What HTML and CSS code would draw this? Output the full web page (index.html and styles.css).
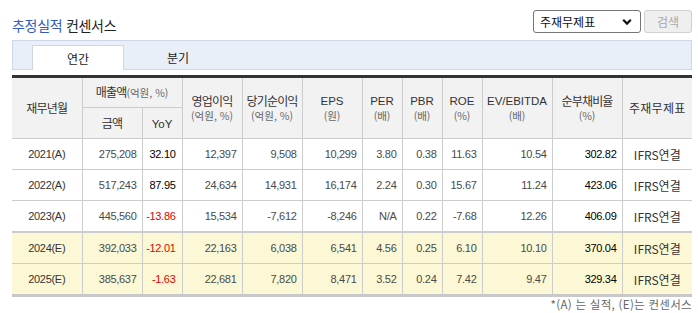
FILE: index.html
```html
<!DOCTYPE html>
<html lang="ko">
<head>
<meta charset="utf-8">
<title>추정실적 컨센서스</title>
<link rel="stylesheet" href="styles.css">
</head>
<body>
<div class="wrap">
  <div class="top">
    <h2 class="title"><span class="blue">추정실적</span> 컨센서스</h2>
    <div class="controls">
      <div class="select"><span>주재무제표</span>
        <svg class="chev" width="10" height="8" viewBox="0 0 10 8"><path d="M1.2 1.8 L5 5.6 L8.8 1.8" fill="none" stroke="#111" stroke-width="2.2"/></svg>
      </div>
      <div class="btn">검색</div>
    </div>
  </div>
  <div class="tabs">
    <div class="tab active">연간</div>
    <div class="tab">분기</div>
  </div>
  <table class="grid">
    <colgroup>
      <col class="w70"><col class="w60"><col class="w40"><col class="w60"><col class="w60"><col class="w60">
      <col class="w40"><col class="w40"><col class="w40"><col class="w70"><col class="w70"><col class="w70">
    </colgroup>
    <thead>
      <tr class="h1">
        <th rowspan="2">재무년월</th>
        <th colspan="2">매출액<span class="unit">(억원, %)</span></th>
        <th rowspan="2">영업이익<br><span class="unit">(억원, %)</span></th>
        <th rowspan="2">당기순이익<br><span class="unit">(억원, %)</span></th>
        <th rowspan="2"><span class="en">EPS</span><br><span class="unit">(원)</span></th>
        <th rowspan="2"><span class="en">PER</span><br><span class="unit">(배)</span></th>
        <th rowspan="2"><span class="en">PBR</span><br><span class="unit">(배)</span></th>
        <th rowspan="2"><span class="en">ROE</span><br><span class="unit">(%)</span></th>
        <th rowspan="2"><span class="en">EV/EBITDA</span><br><span class="unit">(배)</span></th>
        <th rowspan="2">순부채비율<br><span class="unit">(%)</span></th>
        <th rowspan="2" class="wide">주재무제표</th>
      </tr>
      <tr class="h2">
        <th>금액</th>
        <th><span class="en">YoY</span></th>
      </tr>
    </thead>
    <tbody>
      <tr>
        <td class="yr">2021(A)</td><td>275,208</td><td class="em yoy">32.10</td><td>12,397</td><td>9,508</td><td>10,299</td>
        <td>3.80</td><td>0.38</td><td>11.63</td><td>10.54</td><td class="em">302.82</td><td class="ko">IFRS연결</td>
      </tr>
      <tr>
        <td class="yr">2022(A)</td><td>517,243</td><td class="em yoy">87.95</td><td>24,634</td><td>14,931</td><td>16,174</td>
        <td>2.24</td><td>0.30</td><td>15.67</td><td>11.24</td><td class="em">423.06</td><td class="ko">IFRS연결</td>
      </tr>
      <tr class="last-a">
        <td class="yr">2023(A)</td><td>445,560</td><td class="neg yoy">-13.86</td><td>15,534</td><td>-7,612</td><td>-8,246</td>
        <td>N/A</td><td>0.22</td><td>-7.68</td><td>12.26</td><td class="em">406.09</td><td class="ko">IFRS연결</td>
      </tr>
      <tr class="est">
        <td class="yr">2024(E)</td><td>392,033</td><td class="neg yoy">-12.01</td><td>22,163</td><td>6,038</td><td>6,541</td>
        <td>4.56</td><td>0.25</td><td>6.10</td><td>10.10</td><td class="em">370.04</td><td class="ko">IFRS연결</td>
      </tr>
      <tr class="est last">
        <td class="yr">2025(E)</td><td>385,637</td><td class="neg yoy">-1.63</td><td>22,681</td><td>7,820</td><td>8,471</td>
        <td>3.52</td><td>0.24</td><td>7.42</td><td>9.47</td><td class="em">329.34</td><td class="ko">IFRS연결</td>
      </tr>
    </tbody>
  </table>
  <p class="note">*(A) 는 실적, (E)는 컨센서스</p>
</div>
</body>
</html>
```

FILE: styles.css
```css
html, body { margin: 0; padding: 0; background: #fff; }
body { font-family: "Noto Sans CJK KR", "Liberation Sans", sans-serif; color: #333; }

.wrap { width: 680px; padding: 0 6px 0 12px; }

.top { height: 40px; display: flex; justify-content: space-between; align-items: flex-start; }
.title { margin: 17px 0 0; font-size: 14px; line-height: 16px; font-weight: normal; color: #222; letter-spacing: -0.3px; }
.blue { color: #3459c0; }

.controls { margin-top: 10px; display: flex; gap: 3px; }
.select { box-sizing: border-box; width: 108px; height: 23px; border: 1px solid #767676; border-radius: 3px; display: flex; align-items: center; justify-content: space-between; padding: 0 8px 0 6px; font-size: 12px; color: #111; }
.chev { display: block; }
.btn { width: 48px; height: 23px; box-sizing: border-box; border: 1px solid #d0d0d0; border-radius: 3px; background: #efefef; color: #a8a8a8; font-size: 12px; display: flex; align-items: center; justify-content: center; }

.tabs { height: 30px; box-sizing: border-box; border: 1px solid #cfd7e6; background: #e9eff9; display: flex; align-items: flex-end; padding-left: 19px; gap: 8px; }
.tab { width: 92px; height: 25px; box-sizing: border-box; margin-bottom: -1px; display: flex; align-items: center; justify-content: center; font-size: 12px; color: #222; }
.tab.active { background: #fff; border: 1px solid #cfd7e6; border-bottom: none; }

.grid { margin-top: 5px; width: 680px; table-layout: fixed; border-collapse: collapse; border-top: 3px solid #333; border-bottom: 3px solid #c8c8c8; }
.w70 { width: 70px; } .w60 { width: 60px; } .w40 { width: 40px; }

.grid th, .grid td { border: 1px solid #ccc; padding: 0; }
.grid tr > :first-child { border-left: none; }
.grid tr > :last-child { border-right: none; }
.grid th.wide { border-right: none; }

.grid th { background: #f2f2f2; font-weight: normal; font-size: 12px; letter-spacing: -0.8px; line-height: 14px; color: #333; text-align: center; white-space: nowrap; }
.grid tr.h1 th { height: 29px; }
.grid tr.h2 th { height: 30px; }
.grid th .unit { font-size: 10.5px; letter-spacing: 0; color: #666; }
.grid th .en { font-family: "Liberation Sans", sans-serif; font-size: 11.5px; letter-spacing: 0; }
.grid th.wide { font-size: 12px; letter-spacing: 0.3px; }

.grid td { height: 30px; font-family: "Liberation Sans", sans-serif; font-size: 11px; letter-spacing: -0.3px; color: #4a4a4a; text-align: right; padding-right: 5px; }
.grid td.yoy { padding-right: 6px; }
.grid td.yr { text-align: center; padding-right: 0; color: #333; }
.grid td.ko { text-align: center; padding-right: 0; font-family: "Noto Sans CJK KR", "Liberation Sans", sans-serif; font-size: 12px; letter-spacing: 0; color: #333; }
.grid td.em { color: #000; }
.grid td.neg { color: #e60000; }
.grid tr.last-a td { border-bottom: 2px solid #ccc; }
.grid tr.est td { background: #fcf8d5; }

.note { margin: 1px 0 0; text-align: right; font-size: 11.5px; line-height: 13px; letter-spacing: 0.3px; color: #666; }
```
